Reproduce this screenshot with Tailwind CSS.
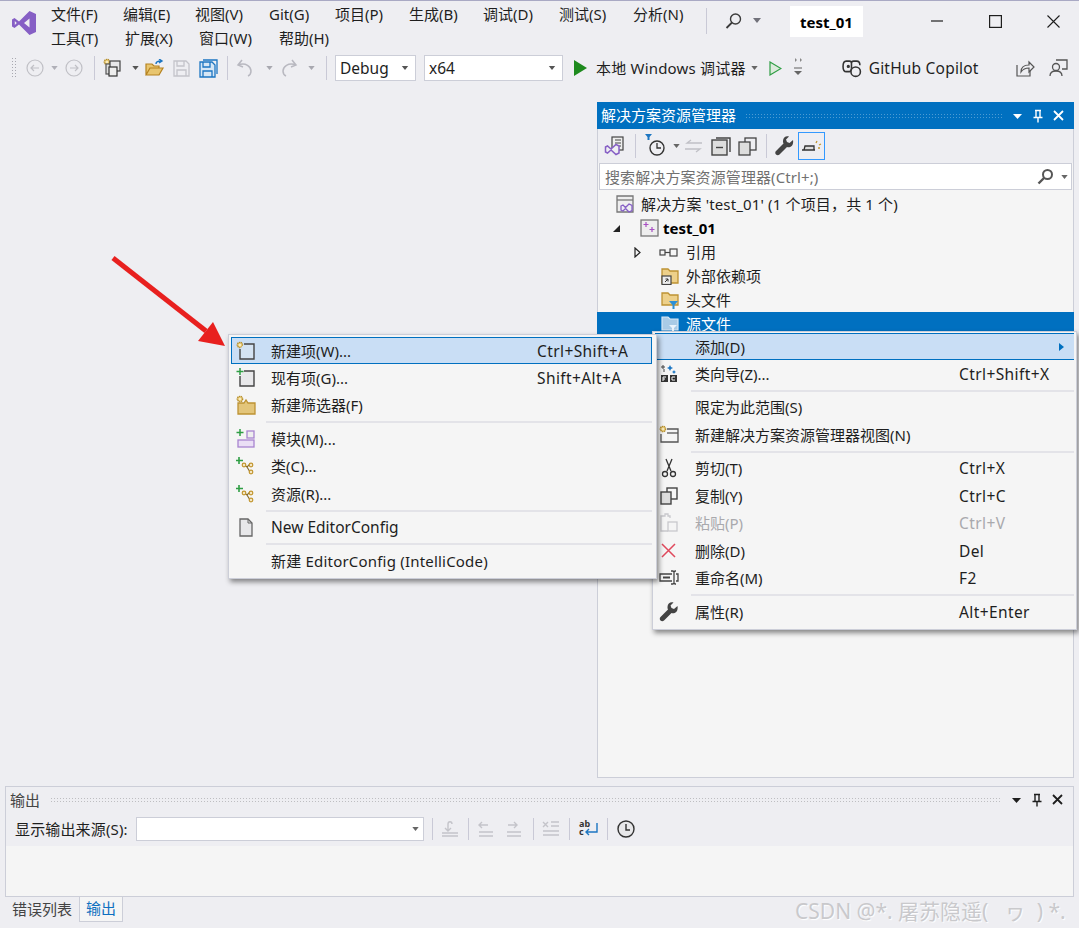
<!DOCTYPE html>
<html>
<head>
<meta charset="UTF-8">
<script src="https://cdn.jsdelivr.net/npm/@tailwindcss/browser@4"></script>
</head>
<body class="bg-[#eeeef2]">
<!-- shared icons -->
<svg class="hidden">
  <symbol id="caret" viewBox="0 0 8 5"><path d="M0 0h8L4 5z" fill="currentColor"/></symbol>
  <symbol id="cls" viewBox="0 0 20 20">
    <path d="M3 1v7M0 4.500h7" stroke="#2f9e44" stroke-width="1.600" fill="none"/>
    <path d="M7 8l4 3 3-3M11 11l3 5" stroke="#8a6d2b" stroke-width="1.200" fill="none"/>
    <circle cx="8" cy="9" r="1.800" fill="#f4e7c6" stroke="#c2962f" stroke-width="1.200"/>
    <circle cx="15" cy="9" r="1.800" fill="#f4e7c6" stroke="#c2962f" stroke-width="1.200"/>
    <circle cx="15" cy="16" r="1.800" fill="#f4e7c6" stroke="#c2962f" stroke-width="1.200"/>
  </symbol>
  <symbol id="gear" viewBox="0 0 8 8"><circle cx="4" cy="4" r="2.600" fill="#f3d98a" stroke="#b68f2e" stroke-width="1.500" stroke-dasharray="1.300 .5"/><circle cx="4" cy="4" r=".8" fill="#fff"/></symbol>
  <symbol id="dock" viewBox="0 0 62 14">
    <path d="M3 5h9l-4.500 5z" fill="currentColor"/>
    <path d="M25 1.500h6M26 1.500v7h4v-7M23.500 8.500h9M28 8.500v5" stroke="currentColor" stroke-width="1.400" fill="none"/>
    <path d="M44 2l9 9M53 2l-9 9" stroke="currentColor" stroke-width="1.800" fill="none"/>
  </symbol>
</svg>

<div class="relative w-[1079px] h-[928px] overflow-hidden flex flex-col border-t border-[#a9a9c4] text-[15px] leading-[20px] text-[#1e1e1e] font-['Noto_Sans','Noto_Sans_CJK_SC',sans-serif]">

  <!-- title bar and menus -->
  <div class="flex h-[51px] shrink-0">
    <div class="w-[51px] flex justify-center pt-[9px] pr-[3px]">
      <svg width="26" height="26" viewBox="0 0 26 26"><path d="M18.500 1L25 4v18l-6.500 3L8 14.500 3.500 18 1 16.500v-7L3.500 8 8 11.500zM18.500 8.500L13 13l5.500 4.500zM3.800 11v4l2-2z" fill="#865fc5" fill-rule="evenodd"/></svg>
    </div>
    <div class="w-[655px] pt-[3px] flex flex-col gap-[4px]">
      <div class="flex h-[20px]">
        <span class="w-[72px]">文件(F)</span><span class="w-[72px]">编辑(E)</span><span class="w-[74px]">视图(V)</span><span class="w-[66px]">Git(G)</span><span class="w-[74px]">项目(P)</span><span class="w-[74px]">生成(B)</span><span class="w-[76px]">调试(D)</span><span class="w-[74px]">测试(S)</span><span>分析(N)</span>
      </div>
      <div class="flex h-[20px]">
        <span class="w-[74px]">工具(T)</span><span class="w-[74px]">扩展(X)</span><span class="w-[80px]">窗口(W)</span><span>帮助(H)</span>
      </div>
    </div>
    <div class="w-px h-[26px] mt-[7px] bg-[#c9c9d6]"></div>
    <div class="w-[83px] flex items-start pt-[11px] pl-[18px]">
      <svg width="18" height="18" viewBox="0 0 18 18" fill="none" stroke="#3b3b3b" stroke-width="1.400"><circle cx="10.500" cy="7" r="5"/><path d="M7 10.500L1.500 16" stroke-width="1.800"/></svg>
      <svg class="ml-[10px] mt-[6px] text-[#71717a]" width="8" height="5"><use href="#caret"/></svg>
    </div>
    <div class="w-[73px] h-[31px] mt-[5px] bg-white flex items-center justify-center font-bold text-black">test_01</div>
    <div class="w-[216px] pl-[68px] pt-[14px] flex items-start">
      <svg width="12" height="12" viewBox="0 0 12 12"><path d="M0 6h12" stroke="#1e1e1e" stroke-width="1.200"/></svg>
      <svg width="13" height="13" viewBox="0 0 13 13" class="ml-[46px]"><rect x=".6" y=".6" width="11.800" height="11.800" fill="none" stroke="#1e1e1e" stroke-width="1.200"/></svg>
      <svg width="13" height="13" viewBox="0 0 13 13" class="ml-[45px]"><path d="M.5.500l12 12M12.500.500l-12 12" stroke="#1e1e1e" stroke-width="1.100"/></svg>
    </div>
  </div>

  <!-- standard toolbar -->
  <div class="flex items-center h-[32px] shrink-0 pl-[11px]">
    <div class="w-[5px] h-[22px] bg-[radial-gradient(#a8a8b0_1px,transparent_1px)] bg-[length:3px_3px]"></div>
    <svg class="ml-[10px]" width="18" height="18" viewBox="0 0 18 18" fill="none" stroke="#c0c0c6" stroke-width="1.200"><circle cx="9" cy="9" r="8"/><path d="M13 9H5M8 6L5 9l3 3"/></svg>
    <svg class="ml-[7px] text-[#b0b0b8]" width="7" height="4"><use href="#caret"/></svg>
    <svg class="ml-[7px]" width="18" height="18" viewBox="0 0 18 18" fill="none" stroke="#c0c0c6" stroke-width="1.200"><circle cx="9" cy="9" r="8"/><path d="M5 9h8M10 6l3 3-3 3"/></svg>
    <div class="w-px h-[24px] ml-[11px] bg-[#c9c9d6]"></div>
    <svg class="ml-[8px]" width="20" height="20" viewBox="0 0 20 20"><use href="#gear" x="0" y="0" width="8" height="8"/><rect x="3" y="6" width="10" height="10" fill="#ddd" stroke="#555" stroke-width="1.200"/><rect x="7" y="3" width="10" height="10" fill="#e8e8ea" stroke="#444" stroke-width="1.200"/><rect x="6" y="9" width="8" height="9" fill="#eee" stroke="#333" stroke-width="1.200"/></svg>
    <svg class="ml-[9px] text-[#555]" width="7" height="4"><use href="#caret"/></svg>
    <svg class="ml-[6px]" width="20" height="18" viewBox="0 0 20 18"><path d="M1 16V5h6l2 2h5v2H5L1 16h13l4-7H5" fill="#e8c56f" stroke="#b5821f" stroke-width="1.200"/><path d="M11 5c0-2 2-3 5-3M14 0l3 2-3 2" fill="none" stroke="#1c76c2" stroke-width="1.400"/></svg>
    <svg class="ml-[8px]" width="17" height="17" viewBox="0 0 17 17" fill="none" stroke="#c4c4ca" stroke-width="1.300"><path d="M1 1h12l3 3v12H1z"/><path d="M4 1v5h7V1M4 16v-6h9v6"/></svg>
    <svg class="ml-[9px]" width="19" height="19" viewBox="0 0 19 19" fill="none" stroke="#1c76c2" stroke-width="1.300"><path d="M4 1h14v14"/><path d="M1 3h12l3 3v12H1z" fill="#d6e6f5"/><path d="M4 3v5h7V3M4 18v-6h9v6"/></svg>
    <div class="w-px h-[24px] ml-[9px] bg-[#c9c9d6]"></div>
    <svg class="ml-[8px]" width="17" height="18" viewBox="0 0 17 18" fill="none" stroke="#b8b8c0" stroke-width="1.500"><path d="M6 1L2 6l5 2M2 6c8-3 13 2 13 6 0 2-1 4-3 5"/></svg>
    <svg class="ml-[13px] text-[#a8a8b0]" width="7" height="4"><use href="#caret"/></svg>
    <svg class="ml-[8px]" width="17" height="18" viewBox="0 0 17 18" fill="none" stroke="#b8b8c0" stroke-width="1.500"><path d="M11 1l4 5-5 2M15 6C7 3 2 8 2 12c0 2 1 4 3 5"/></svg>
    <svg class="ml-[10px] text-[#a8a8b0]" width="7" height="4"><use href="#caret"/></svg>
    <div class="w-px h-[24px] ml-[11px] bg-[#c9c9d6]"></div>
    <div class="ml-[8px] w-[81px] h-[26px] bg-white border border-[#ccced8] flex items-center pl-[4px] text-[15.5px]">Debug<svg class="ml-auto mr-[6px] text-[#555]" width="8" height="4"><use href="#caret"/></svg></div>
    <div class="ml-[8px] w-[139px] h-[26px] bg-white border border-[#ccced8] flex items-center pl-[4px] text-[15.5px]">x64<svg class="ml-auto mr-[6px] text-[#555]" width="8" height="4"><use href="#caret"/></svg></div>
    <svg class="ml-[11px]" width="13" height="16" viewBox="0 0 13 16"><path d="M0 0l13 8-13 8z" fill="#1e8a1e"/></svg>
    <span class="ml-[9px] whitespace-nowrap tracking-[.2px]">本地 Windows 调试器</span>
    <svg class="ml-[5px] text-[#666]" width="7" height="4"><use href="#caret"/></svg>
    <svg class="ml-[11px]" width="13" height="15" viewBox="0 0 13 15"><path d="M1 1l11 6.500L1 14z" fill="#dceadc" stroke="#2f9e44" stroke-width="1.200"/></svg>
    <svg class="ml-[12px]" width="9" height="22" viewBox="0 0 9 22"><path d="M1 1l2 2-2 2zM6 1l2 2-2 2z" fill="#888"/><path d="M0 11h8" stroke="#777" stroke-width="1.200"/><path d="M0 14h8l-4 4z" fill="#666"/></svg>
    <svg class="ml-[39px]" width="20" height="19" viewBox="0 0 19 18" fill="none" stroke="#333" stroke-width="1.500"><path d="M4 2c-2 0-3 2-3 5s1 5 3 5h3c1 0 2-1 2-3V4c0-1-1-2-2-2zM9 4c0-1 1-2 2-2h3c2 0 3 2 3 4"/><circle cx="6" cy="7" r=".8"/><circle cx="13" cy="12" r="4.500" fill="#eeeef2"/></svg>
    <span class="ml-[7px] whitespace-nowrap text-[15.5px] tracking-[.2px]">GitHub Copilot</span>
    <svg class="ml-[37px]" width="19" height="18" viewBox="0 0 19 18" fill="none" stroke="#555" stroke-width="1.200"><path d="M1 6v11h13v-5"/><path d="M5 13c0-5 3-7 8-7V3l5 5-5 5V9c-4 0-6 1-8 4z" fill="#eeeef2"/></svg>
    <svg class="ml-[14px]" width="19" height="18" viewBox="0 0 19 18" fill="none" stroke="#555" stroke-width="1.300"><path d="M7 1h11v9h-5"/><circle cx="7" cy="8" r="3.500" fill="#eeeef2"/><path d="M1 17c0-3 2-5 6-5s6 2 6 5"/></svg>
  </div>

  <!-- document area and solution explorer -->
  <div class="flex-1 flex justify-end pt-[18px] pr-[5px] pb-[8px] min-h-0">
    <div class="w-[477px] flex flex-col bg-[#f5f5f5] border-x border-b border-[#ccced8]">
      <div class="h-[27px] -mx-px shrink-0 bg-[#0070c0] flex items-center pl-[4px] text-white">
        <span class="whitespace-nowrap pb-[2px]">解决方案资源管理器</span>
        <div class="ml-[9px] w-[258px] h-[6px] opacity-30 bg-[radial-gradient(#ffffff_1px,transparent_1px)] bg-[length:3px_3px]"></div>
        <svg class="ml-[7px] text-white" width="62" height="14"><use href="#dock"/></svg>
      </div>
      <div class="h-[34px] shrink-0 bg-[#eeeef2] flex items-center pl-[6px]">
        <svg width="20" height="20" viewBox="0 0 20 20"><rect x="8" y="1" width="11" height="13" fill="#eee" stroke="#444" stroke-width="1.200"/><path d="M11 4h6M11 7h6M11 10h6" stroke="#444"/><path d="M1.500 11l2-1 3.500 3 5-4.500 3 1.500v7l-3 1.500-5-4.500-3.500 3-2-1z" fill="#eeeef2" stroke="#865fc5" stroke-width="1.500"/></svg>
        <div class="w-px h-[24px] ml-[11px] bg-[#c9c9d6]"></div>
        <svg class="ml-[9px]" width="22" height="24" viewBox="0 0 22 24" fill="none"><path d="M0 0h7L4.500 3v3h-2V3z" fill="#1c76c2"/><circle cx="12" cy="14" r="7" stroke="#333" stroke-width="1.400"/><path d="M12 9v5h4" stroke="#333" stroke-width="1.300"/></svg>
        <svg class="ml-[6px] text-[#666]" width="7" height="4"><use href="#caret"/></svg>
        <svg class="ml-[5px]" width="17" height="14" viewBox="0 0 17 14" fill="none" stroke="#c0c0c6" stroke-width="1.300"><path d="M17 4H2l4-3M0 10h15l-4 3"/></svg>
        <svg class="ml-[9px]" width="20" height="20" viewBox="0 0 20 20" fill="none" stroke="#444" stroke-width="1.400"><path d="M5 2h14v14"/><rect x="1" y="4" width="15" height="15" fill="#ddd"/><path d="M5 11.500h7"/></svg>
        <svg class="ml-[7px]" width="19" height="19" viewBox="0 0 19 19" fill="none" stroke="#444" stroke-width="1.300"><rect x="7" y="1" width="11" height="12"/><rect x="1" y="5" width="11" height="13" fill="#ddd"/></svg>
        <div class="w-px h-[24px] ml-[9px] bg-[#c9c9d6]"></div>
        <svg class="ml-[8px]" width="19" height="20" viewBox="0 0 19 20"><path d="M18 4l-3.500 3-2.500-1-1-2.500L14 .500C11-.500 8 1.500 8 5c0 1 0 1.500.5 2.500L1 15c-1 1-1 2.500 0 3.500s2.500 1 3.500 0L12 11c3 1 7-1 6-7z" fill="#444"/></svg>
        <div class="ml-[4px] w-[27px] h-[28px] border border-[#3399ff] flex items-center justify-center">
          <svg width="21" height="14" viewBox="0 0 21 14"><path d="M1 11h13M3 11l1-4h9v4" fill="#ddd" stroke="#333" stroke-width="1.300"/><path d="M15 4l1-2M18 6l2-1M17 9h2" stroke="#c2962f" stroke-width="1.300"/></svg>
        </div>
      </div>
      <div class="h-[27px] shrink-0 mx-[1px] bg-white border border-[#ccced8] flex items-center pl-[5px] text-[#717171]">
        <span class="whitespace-nowrap tracking-[.1px]">搜索解决方案资源管理器(Ctrl+;)</span>
        <svg class="ml-auto" width="17" height="17" viewBox="0 0 17 17" fill="none" stroke="#555" stroke-width="2"><circle cx="10.500" cy="6.500" r="4.500"/><path d="M7 10l-5.500 5.500" stroke-width="2.400"/></svg>
        <svg class="ml-[7px] mr-[3px] text-[#666]" width="7" height="4"><use href="#caret"/></svg>
      </div>
      <div class="flex flex-col pt-[2px]">
        <div class="h-[24px] flex items-center pl-[18px]">
          <svg width="19" height="19" viewBox="0 0 19 19"><path d="M1 1h16v16H1z" fill="#eee" stroke="#777" stroke-width="1.300"/><path d="M1 5h16" stroke="#777" stroke-width="1.300"/><path d="M5 11l2-1 2.500 2.500L13 9l3 1.500v5L13 17l-3.500-3.500L7 16l-2-1z" fill="#eeeef2" stroke="#865fc5" stroke-width="1.300"/></svg>
          <span class="ml-[6px] whitespace-nowrap tracking-[.15px]">解决方案 'test_01' (1 个项目，共 1 个)</span>
        </div>
        <div class="h-[24px] flex items-center pl-[14px]">
          <svg width="9" height="9" viewBox="0 0 9 9"><path d="M8 1v7H1z" fill="#222"/></svg>
          <svg class="ml-[19px]" width="19" height="19" viewBox="0 0 19 19"><rect x="1" y="1" width="17" height="16" fill="#eee" stroke="#777" stroke-width="1.300"/><path d="M6 3v5M3.500 5.500h5M12 8v5M9.500 10.500h5" stroke="#a84fc4" stroke-width="1.200"/></svg>
          <span class="ml-[4px] font-bold text-black">test_01</span>
        </div>
        <div class="h-[24px] flex items-center pl-[36px]">
          <svg width="7" height="11" viewBox="0 0 7 11"><path d="M1 1l5 4.500L1 10z" fill="none" stroke="#222" stroke-width="1.200"/></svg>
          <svg class="ml-[18px]" width="20" height="9" viewBox="0 0 20 9" fill="none" stroke="#444" stroke-width="1.200"><rect x="1" y="2" width="5" height="5"/><path d="M6 4.500h5"/><rect x="11" y="1" width="7" height="7"/></svg>
          <span class="ml-[7px]">引用</span>
        </div>
        <div class="h-[24px] flex items-center pl-[63px]">
          <svg width="18" height="18" viewBox="0 0 18 18"><path d="M1 16V2h6l2 2h8v12z" fill="#edd08a" stroke="#bd9233" stroke-width="1.300"/><rect x="1" y="9" width="9" height="8.500" fill="#eee" stroke="#444" stroke-width="1.200"/><path d="M4 15l3-3M4.500 12H7v2.500" stroke="#333" fill="none"/></svg>
          <span class="ml-[7px]">外部依赖项</span>
        </div>
        <div class="h-[24px] flex items-center pl-[63px]">
          <svg width="18" height="18" viewBox="0 0 18 18"><path d="M1 14V2h6l2 2h8v10z" fill="#edd08a" stroke="#bd9233" stroke-width="1.300"/><path d="M8 10h9l-3.500 4v4h-2v-4z" fill="#2b8fd6"/></svg>
          <span class="ml-[7px]">头文件</span>
        </div>
        <div class="h-[24px] -mx-px bg-[#0070c0] text-white flex items-center pl-[64px]">
          <svg width="18" height="18" viewBox="0 0 18 18"><path d="M1 15V2h6l2 2h8v11z" fill="#a9cbe6" stroke="#d8e8f5" stroke-width="1.200"/><path d="M8 10h8l-3 3v3h-2v-3z" fill="#eaf4fc"/></svg>
          <span class="ml-[7px]">源文件</span>
        </div>
      </div>
    </div>
  </div>

  <!-- output panel -->
  <div class="h-[111px] shrink-0 mx-[5px] flex flex-col border border-[#ccced8]">
    <div class="h-[25px] shrink-0 flex items-center pl-[4px] text-[#444]">
      <span>输出</span>
      <div class="ml-[10px] w-[952px] h-[6px] opacity-40 bg-[radial-gradient(#777_1px,transparent_1px)] bg-[length:3px_3px]"></div>
      <svg class="ml-[7px] text-[#1e1e1e]" width="62" height="14"><use href="#dock"/></svg>
    </div>
    <div class="h-[34px] shrink-0 flex items-center pl-[9px]">
      <span class="w-[121px] whitespace-nowrap tracking-[.15px]">显示输出来源(S):</span>
      <div class="w-[288px] h-[24px] bg-white border border-[#ccced8] flex items-center justify-end pr-[4px]"><svg class="text-[#666]" width="7" height="4"><use href="#caret"/></svg></div>
      <div class="w-px h-[22px] ml-[8px] bg-[#c9c9d6]"></div>
      <svg class="ml-[8px]" width="18" height="18" viewBox="0 0 18 18" fill="none" stroke="#c4c4ca" stroke-width="1.400"><path d="M7 10V4c0-3 4-3 4 0M4 8l3 3 3-3M1 13h16M1 16h16"/></svg>
      <div class="w-px h-[22px] ml-[9px] bg-[#c9c9d6]"></div>
      <svg class="ml-[9px]" width="16" height="18" viewBox="0 0 16 18" fill="none" stroke="#c4c4ca" stroke-width="1.400"><path d="M10 5H1M4 2L1 5l3 3M1 12h14M1 16h14"/></svg>
      <svg class="ml-[12px]" width="16" height="18" viewBox="0 0 16 18" fill="none" stroke="#c4c4ca" stroke-width="1.400"><path d="M2 5h9M8 2l3 3-3 3M1 12h14M1 16h14"/></svg>
      <div class="w-px h-[22px] ml-[11px] bg-[#c9c9d6]"></div>
      <svg class="ml-[8px]" width="18" height="18" viewBox="0 0 18 18" fill="none" stroke="#c4c4ca" stroke-width="1.400"><path d="M1 2l5 5M6 2L1 7M9 2h8M9 6h8M1 11h16M1 15h16"/></svg>
      <div class="w-px h-[22px] ml-[9px] bg-[#c9c9d6]"></div>
      <div class="ml-[9px] w-[20px] h-[20px] relative">
        <span class="absolute left-0 top-[1px] text-[9px] leading-[8px] font-bold text-[#333] w-[12px]">ab c</span>
        <svg class="absolute left-[3px] top-[3px]" width="17" height="15" viewBox="0 0 17 15" fill="none" stroke="#1c76c2" stroke-width="1.400"><path d="M15 1v9H4M7 7l-3 3 3 3"/></svg>
      </div>
      <div class="w-px h-[22px] ml-[8px] bg-[#c9c9d6]"></div>
      <svg class="ml-[9px]" width="18" height="18" viewBox="0 0 18 18" fill="none" stroke="#333" stroke-width="1.400"><circle cx="9" cy="9" r="8" fill="#e8e8ea"/><path d="M9 4v6h4"/></svg>
    </div>
    <div class="flex-1 bg-[#f5f5f5]"></div>
  </div>
  <div class="h-[31px] shrink-0 pl-[5px] flex items-start">
    <span class="w-[74px] h-[25px] pl-[7px] flex items-center text-[#444] whitespace-nowrap pb-[2px]">错误列表</span>
    <span class="w-[44px] h-[25px] bg-[#f5f5f5] border-x border-b border-[#ccced8] flex items-center justify-center text-[#0e70c0] pb-[2px]">输出</span>
  </div>

  <!-- add submenu -->
  <div class="absolute z-10 left-[652px] top-[330px] w-[425px] h-[299px] bg-[#f5f5f5] border border-[#ccced8] px-[2px] pt-[1px] shadow-[2px_3px_5px_rgba(0,0,0,0.45)]">
    <div class="h-[27px] flex items-center bg-[#c9def5] border-y border-[#0070c0]"><span class="ml-[40px]">添加(D)</span><svg class="ml-auto mr-[10px]" width="5" height="8" viewBox="0 0 5 8"><path d="M0 0l5 4-5 4z" fill="#0070c0"/></svg></div>
    <div class="h-[27.5px] flex items-center">
      <svg class="ml-[4px]" width="20" height="20" viewBox="0 0 20 20"><path d="M4 1v4M2 3h4M5 5v3" stroke="#444"/><path d="M11 1l1 2 2 1-2 1-1 2-1-2-2-1 2-1zM15 6l.7 1.300L17 8l-1.300.7L15 10l-.7-1.300L13 8l1.300-.7z" fill="#1c76c2"/><rect x="2" y="11" width="7" height="7" fill="#333"/><rect x="11" y="11" width="7" height="7" fill="#333"/><path d="M4 13h3M4 15h2M4 13v4M13 13h3M13 13v3h3" stroke="#fff"/></svg>
      <span class="ml-[16px] w-[264px]">类向导(Z)...</span><span class="text-[15.5px] tracking-[.4px]">Ctrl+Shift+X</span>
    </div>
    <div class="h-[6px] flex items-center pl-[36px]"><div class="w-full h-[2px] bg-[#e3e3e8]"></div></div>
    <div class="h-[27.5px] flex items-center"><span class="ml-[40px]">限定为此范围(S)</span></div>
    <div class="h-[27.5px] flex items-center">
      <svg class="ml-[4px]" width="20" height="20" viewBox="0 0 20 20"><use href="#gear" x="0" y="0" width="8" height="8"/><path d="M8 4h11v13H2V9" fill="none" stroke="#555" stroke-width="1.300"/><path d="M8 8h11" stroke="#555" stroke-width="1.300"/></svg>
      <span class="ml-[16px] whitespace-nowrap">新建解决方案资源管理器视图(N)</span>
    </div>
    <div class="h-[6px] flex items-center pl-[36px]"><div class="w-full h-[2px] bg-[#e3e3e8]"></div></div>
    <div class="h-[27.5px] flex items-center">
      <svg class="ml-[4px]" width="20" height="20" viewBox="0 0 20 20" fill="none" stroke="#333" stroke-width="1.300"><path d="M7 1l5 12M13 1L8 13"/><circle cx="6" cy="16" r="2.500"/><circle cx="14" cy="16" r="2.500"/></svg>
      <span class="ml-[16px] w-[264px]">剪切(T)</span><span class="text-[15.5px] tracking-[.4px]">Ctrl+X</span>
    </div>
    <div class="h-[27.5px] flex items-center">
      <svg class="ml-[4px]" width="20" height="20" viewBox="0 0 20 20" fill="none" stroke="#444" stroke-width="1.400"><rect x="8" y="2" width="10" height="11"/><rect x="2" y="6" width="10" height="12" fill="#ddd"/></svg>
      <span class="ml-[16px] w-[264px]">复制(Y)</span><span class="text-[15.5px] tracking-[.4px]">Ctrl+C</span>
    </div>
    <div class="h-[27.5px] flex items-center text-[#a9a9ad]">
      <svg class="ml-[4px]" width="20" height="20" viewBox="0 0 20 20" fill="none" stroke="#c8c8cc" stroke-width="1.300"><path d="M11 5V3H9V1H6v2H2v15h7"/><rect x="9" y="9" width="9" height="9"/></svg>
      <span class="ml-[16px] w-[264px]">粘贴(P)</span><span class="text-[15.5px] tracking-[.4px]">Ctrl+V</span>
    </div>
    <div class="h-[27.5px] flex items-center">
      <svg class="ml-[4px]" width="20" height="20" viewBox="0 0 20 20" fill="none" stroke="#e0495c" stroke-width="1.500"><path d="M3 3l13 13M16 3L3 16"/></svg>
      <span class="ml-[16px] w-[264px]">删除(D)</span><span class="text-[15.5px] tracking-[.4px]">Del</span>
    </div>
    <div class="h-[27.5px] flex items-center">
      <svg class="ml-[4px]" width="20" height="20" viewBox="0 0 20 20" fill="none" stroke="#444" stroke-width="1.300"><path d="M13 6H1v7h12M17 6h2v7h-2"/><path d="M4 9.500h7" stroke-width="2"/><path d="M12 3h2l1 1 1-1h1M15 4v11M12 16h2l1-1 1 1h1"/></svg>
      <span class="ml-[16px] w-[264px]">重命名(M)</span><span class="text-[15.5px] tracking-[.4px]">F2</span>
    </div>
    <div class="h-[6px] flex items-center pl-[36px]"><div class="w-full h-[2px] bg-[#e3e3e8]"></div></div>
    <div class="h-[27.5px] flex items-center">
      <svg class="ml-[4px]" width="20" height="20" viewBox="0 0 19 20"><path d="M18 4l-3.500 3-2.500-1-1-2.500L14 .500C11-.500 8 1.500 8 5c0 1 0 1.500.5 2.500L1 15c-1 1-1 2.500 0 3.500s2.500 1 3.500 0L12 11c3 1 7-1 6-7z" fill="#444"/></svg>
      <span class="ml-[16px] w-[264px]">属性(R)</span><span class="text-[15.5px] tracking-[.4px]">Alt+Enter</span>
    </div>
  </div>

  <!-- new item submenu -->
  <div class="absolute z-20 left-[228px] top-[333px] w-[429px] h-[245px] bg-[#f5f5f5] border border-[#ccced8] pl-[2px] pr-[4px] py-[2px] shadow-[2px_3px_5px_rgba(0,0,0,0.45)]">
    <div class="h-[27px] flex items-center bg-[#c9def5] border border-[#0070c0]">
      <svg class="ml-[4px]" width="20" height="20" viewBox="0 0 20 20"><use href="#gear" x="0" y="0" width="8" height="8"/><path d="M8 3h10v15H4V8" fill="#d4e3f2" stroke="#444" stroke-width="1.400"/></svg>
      <span class="ml-[15px] w-[266px]">新建项(W)...</span><span class="text-[15.5px] tracking-[.4px]">Ctrl+Shift+A</span>
    </div>
    <div class="h-[27.5px] flex items-center">
      <svg class="ml-[5px]" width="20" height="20" viewBox="0 0 20 20"><path d="M8 3h10v15H4V8" fill="#e8e8ea" stroke="#444" stroke-width="1.400"/><path d="M4 0v7M.500 3.500h7" stroke="#2f9e44" stroke-width="1.500"/></svg>
      <span class="ml-[15px] w-[266px]">现有项(G)...</span><span class="text-[15.5px] tracking-[.4px]">Shift+Alt+A</span>
    </div>
    <div class="h-[27.5px] flex items-center">
      <svg class="ml-[5px]" width="20" height="20" viewBox="0 0 20 20"><use href="#gear" x="0" y="0" width="8" height="8"/><path d="M2 19V8h6l2-3 2 3h7v11z" fill="#e3c57a" stroke="#bd9233" stroke-width="1.300"/></svg>
      <span class="ml-[15px]">新建筛选器(F)</span>
    </div>
    <div class="h-[6px] flex items-center pl-[35px]"><div class="w-full h-[2px] bg-[#e3e3e8]"></div></div>
    <div class="h-[27.5px] flex items-center">
      <svg class="ml-[5px]" width="20" height="20" viewBox="0 0 20 20"><path d="M4 0v7M.500 3.500h7" stroke="#2f9e44" stroke-width="1.500"/><rect x="11" y="2" width="7" height="7" fill="#eee" stroke="#a884cf" stroke-width="1.300"/><rect x="2" y="11" width="16" height="7" fill="#eadff5" stroke="#a884cf" stroke-width="1.300"/></svg>
      <span class="ml-[15px]">模块(M)...</span>
    </div>
    <div class="h-[27.5px] flex items-center">
      <svg class="ml-[5px]" width="20" height="20"><use href="#cls"/></svg>
      <span class="ml-[15px]">类(C)...</span>
    </div>
    <div class="h-[27.5px] flex items-center">
      <svg class="ml-[5px]" width="20" height="20"><use href="#cls"/></svg>
      <span class="ml-[15px]">资源(R)...</span>
    </div>
    <div class="h-[6px] flex items-center pl-[35px]"><div class="w-full h-[2px] bg-[#e3e3e8]"></div></div>
    <div class="h-[27.5px] flex items-center">
      <svg class="ml-[5px]" width="20" height="20" viewBox="0 0 20 20"><path d="M4 2h8l4 4v13H4z" fill="#e8e8ea" stroke="#666" stroke-width="1.300"/><path d="M12 2v4h4" fill="none" stroke="#666"/></svg>
      <span class="ml-[15px] text-[15.5px]">New EditorConfig</span>
    </div>
    <div class="h-[6px] flex items-center pl-[35px]"><div class="w-full h-[2px] bg-[#e3e3e8]"></div></div>
    <div class="h-[27.5px] flex items-center"><span class="ml-[40px] whitespace-nowrap tracking-[.2px]">新建 EditorConfig (IntelliCode)</span></div>
  </div>

  <!-- red annotation arrow -->
  <svg class="absolute z-30 left-[100px] top-[244px]" width="140" height="110" viewBox="0 0 140 110"><path d="M13 13L106 86" stroke="#e8201f" stroke-width="5" fill="none"/><path d="M125 101L98 96 113 77z" fill="#e8201f"/></svg>

  <!-- watermark -->
  <div class="absolute z-30 left-[795px] top-[896px] text-[21px] leading-[28px] text-[#c9c9cc] whitespace-pre [text-shadow:1px_1px_1px_#ffffff]">CSDN @*. 屠苏隐遥(   ヮ  ) *.</div>
</div>
</body>
</html>
